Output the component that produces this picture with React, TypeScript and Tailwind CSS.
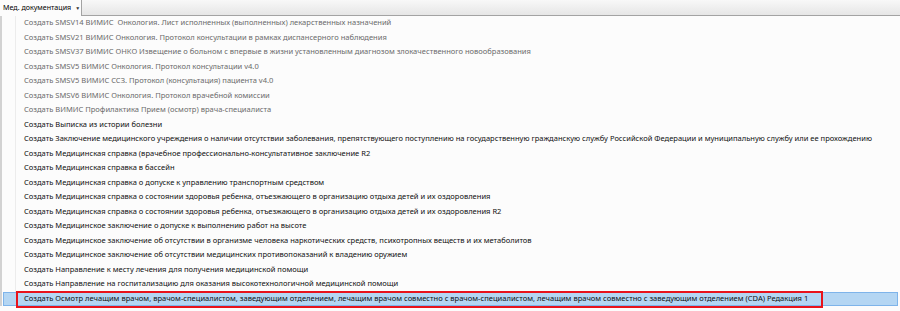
import React from 'react';

interface MenuItem {
  id: number;
  label: string;
  disabled?: boolean;
}

const items: MenuItem[] = [
  { id: 1, label: 'Создать SMSV14 ВИМИС  Онкология. Лист исполненных (выполненных) лекарственных назначений', disabled: true },
  { id: 2, label: 'Создать SMSV21 ВИМИС Онкология. Протокол консультации в рамках диспансерного наблюдения', disabled: true },
  { id: 3, label: 'Создать SMSV37 ВИМИС ОНКО Извещение о больном с впервые в жизни установленным диагнозом злокачественного новообразования', disabled: true },
  { id: 4, label: 'Создать SMSV5 ВИМИС Онкология. Протокол консультации v4.0', disabled: true },
  { id: 5, label: 'Создать SMSV5 ВИМИС ССЗ. Протокол (консультация) пациента v4.0', disabled: true },
  { id: 6, label: 'Создать SMSV6 ВИМИС Онкология. Протокол врачебной комиссии', disabled: true },
  { id: 7, label: 'Создать ВИМИС Профилактика Прием (осмотр) врача-специалиста', disabled: true },
  { id: 8, label: 'Создать Выписка из истории болезни' },
  { id: 9, label: 'Создать Заключение медицинского учреждения о наличии отсутствии заболевания, препятствующего поступлению на государственную гражданскую службу Российской Федерации и муниципальную службу или ее прохождению' },
  { id: 10, label: 'Создать Медицинская справка (врачебное профессионально-консультативное заключение R2' },
  { id: 11, label: 'Создать Медицинская справка в бассейн' },
  { id: 12, label: 'Создать Медицинская справка о допуске к управлению транспортным средством' },
  { id: 13, label: 'Создать Медицинская справка о состоянии здоровья ребенка, отъезжающего в организацию отдыха детей и их оздоровления' },
  { id: 14, label: 'Создать Медицинская справка о состоянии здоровья ребенка, отъезжающего в организацию отдыха детей и их оздоровления R2' },
  { id: 15, label: 'Создать Медицинское заключение о допуске к выполнению работ на высоте' },
  { id: 16, label: 'Создать Медицинское заключение об отсутствии в организме человека наркотических средств, психотропных веществ и их метаболитов' },
  { id: 17, label: 'Создать Медицинское заключение об отсутствии медицинских противопоказаний к владению оружием' },
  { id: 18, label: 'Создать Направление к месту лечения для получения медицинской помощи' },
  { id: 19, label: 'Создать Направление на госпитализацию для оказания высокотехнологичной медицинской помощи' },
  { id: 20, label: 'Создать Осмотр лечащим врачом, врачом-специалистом, заведующим отделением, лечащим врачом совместно с врачом-специалистом, лечащим врачом совместно с заведующим отделением (CDA) Редакция 1' },
];

const SELECTED_ID = 20;

const MenuRow = ({ item }: { item: MenuItem }) => {
  const selected = item.id === SELECTED_ID;

  if (selected) {
    return (
      <div className="relative h-[14.5px] pl-[1px] pr-[2px]">
        <div className="flex h-full items-center border border-[#7eb4ea] bg-[#b4d6f3] pl-[20px]">
          <span className="whitespace-pre text-[#101010]">{item.label}</span>
        </div>
        {/* annotation frame */}
        <div className="pointer-events-none absolute left-[14px] top-[-1px] h-[17px] w-[807px] border-2 border-[#e8131b]" />
      </div>
    );
  }

  return (
    <div className="flex h-[14.5px] items-center pl-[22px]">
      <span className={item.disabled ? 'whitespace-pre text-[#6b6b6b]' : 'whitespace-pre text-[#101010]'}>
        {item.label}
      </span>
    </div>
  );
};

export default function App() {
  return (
    <div className="relative h-[311px] w-[900px] overflow-hidden bg-[#fcfcfc] font-['Noto_Sans',_'Open_Sans',_sans-serif] text-[7.55px] leading-none">
      {/* menu strip */}
      <div className="flex h-[16px] border-b border-[#a3a3a3] bg-gradient-to-b from-[#f8f8f8] to-[#e6e6e6]">
        <div className="relative z-10 flex h-[16px] w-[82px] items-center gap-[4px] border-r border-[#a3a3a3] bg-[#fcfcfc] pl-[3px]">
          <span className="whitespace-nowrap text-[7.1px] text-black">Мед. документация</span>
          <span className="text-[5px] text-[#333]">▼</span>
        </div>
      </div>

      {/* dropdown */}
      <div className="flex">
        <div className="w-[2px] shrink-0 bg-[#d2d2d2]" />
        <div className="relative flex-1">
          <div className="absolute bottom-0 left-[13px] top-0 w-px bg-[#ececec]" />
          {items.map((item) => (
            <MenuRow key={item.id} item={item} />
          ))}
        </div>
      </div>
    </div>
  );
}
